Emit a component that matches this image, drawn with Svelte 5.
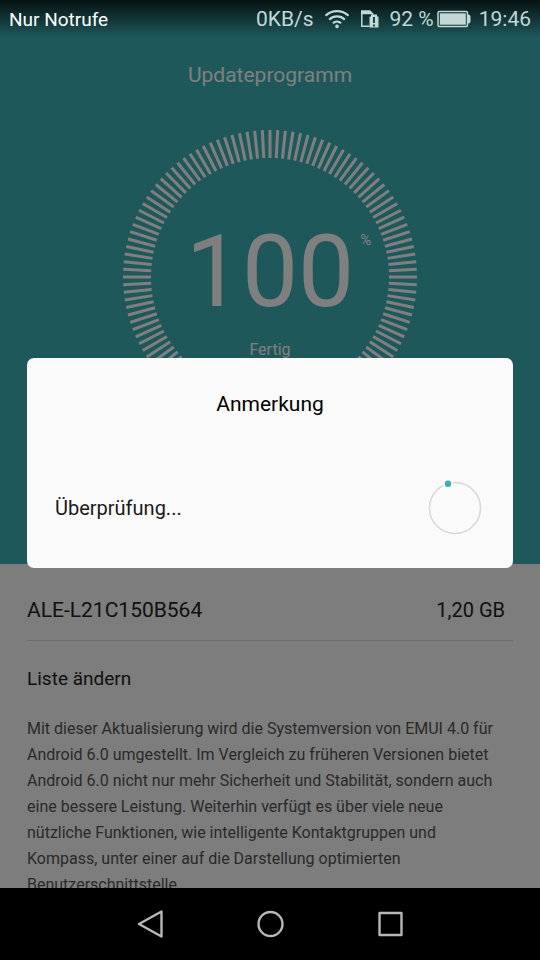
<script>
  const TICKS = 120;
  const ticks = Array.from({ length: TICKS }, (_, i) => (360 / TICKS) * i);

  const update = {
    percent: 100,
    version: 'ALE-L21C150B564',
    size: '1,20 GB',
    notes:
      'Mit dieser Aktualisierung wird die Systemversion von EMUI 4.0 für Android 6.0 umgestellt. Im Vergleich zu früheren Versionen bietet Android 6.0 nicht nur mehr Sicherheit und Stabilität, sondern auch eine bessere Leistung. Weiterhin verfügt es über viele neue nützliche Funktionen, wie intelligente Kontaktgruppen und Kompass, unter einer auf die Darstellung optimierten Benutzerschnittstelle.',
  };
</script>

<div class="screen">
  <main>
    <section class="hero">
      <h1>Updateprogramm</h1>
      <div class="dial">
        <svg class="ring" viewBox="0 0 294 294" aria-hidden="true">
          {#each ticks as angle}
            <line x1="147" y1="0" x2="147" y2="28" transform="rotate({angle} 147 147)" />
          {/each}
        </svg>
        <div class="readout">
          <div class="percent">{update.percent}<sup>%</sup></div>
          <div class="state">Fertig</div>
        </div>
      </div>
    </section>

    <section class="details">
      <div class="version">
        <span>{update.version}</span>
        <span class="size">{update.size}</span>
      </div>
      <h2>Liste ändern</h2>
      <p>{update.notes}</p>
    </section>
  </main>

  <nav>
    <button aria-label="Zurück">
      <svg width="30" height="30" viewBox="0 0 30 30"><path d="M26.500 2.500v25L4 15z" /></svg>
    </button>
    <button aria-label="Startseite">
      <svg width="30" height="30" viewBox="0 0 30 30"><circle cx="15.500" cy="15" r="12" /></svg>
    </button>
    <button aria-label="Übersicht">
      <svg width="30" height="30" viewBox="0 0 30 30"><rect x="4.500" y="4" width="22" height="22" /></svg>
    </button>
  </nav>

  <div class="scrim">
    <div class="dialog" role="dialog" aria-labelledby="dialog-title">
      <h2 id="dialog-title">Anmerkung</h2>
      <div class="checking">
        <span>Überprüfung...</span>
        <svg width="54" height="54" viewBox="0 0 54 54" aria-hidden="true">
          <circle class="track" cx="27" cy="27" r="25.5" />
          <circle class="halo" cx="20" cy="2.8" r="5" />
          <circle class="dot" cx="20" cy="2.8" r="3.2" />
        </svg>
      </div>
    </div>
  </div>

  <header class="status">
    <span class="carrier">Nur Notrufe</span>
    <span class="speed">0KB/s</span>
    <svg class="wifi" width="26" height="20" viewBox="0 0 26 20" aria-hidden="true">
      <path d="M1.5 6.8a16.5 16.5 0 0 1 23 0M5.2 10.6a11.2 11.2 0 0 1 15.6 0M8.900 14.3a6 6 0 0 1 8.2 0" />
      <circle cx="13" cy="17.4" r="1.8" />
    </svg>
    <svg class="sim" width="20" height="20" viewBox="0 0 20 20" aria-hidden="true">
      <path class="card" d="M9.5 17.2H1.800V2.200h8l3.200 3.300" />
      <path class="fill" d="M1 1.500h9.200L14 5.300H1z" />
      <path class="fill" d="M9.500 7.500h1.500V5.500h6v2h1.500v11h-9z" />
      <path class="mark" d="M14 8v6M14 15.500v2" />
    </svg>
    <span class="level">92 %</span>
    <svg class="battery" width="34" height="18" viewBox="0 0 34 18" aria-hidden="true">
      <rect class="case" x="1" y="1.5" width="29.5" height="15" rx="1.5" />
      <rect class="fill" x="2.8" y="3.3" width="26" height="11.4" />
      <path class="fill" d="M31 4.5h1L33.500 6v6L32 13.5h-1z" />
    </svg>
    <span class="clock">19:46</span>
  </header>
</div>

<style>
  :global(body) {
    margin: 0;
    background: #000;
  }

  .screen {
    position: relative;
    display: flex;
    flex-direction: column;
    height: 100vh;
    overflow: hidden;
    font-family: Roboto, 'Liberation Sans', sans-serif;
    color: #222;
  }

  main {
    flex: 1;
    min-height: 0;
    overflow: hidden;
    background: #fafafa;
  }

  h1, h2, p {
    margin: 0;
    font-weight: 400;
  }

  .hero {
    box-sizing: border-box;
    min-height: 564px;
    padding-top: 60px;
    display: flex;
    flex-direction: column;
    align-items: center;
    gap: 40px;
    background: #3cb0b6;
    color: #fff;
  }

  h1 {
    font-size: 21px;
    line-height: 30px;
  }

  .dial {
    display: grid;
    place-items: center;
    width: 294px;
    height: 294px;
  }

  .ring, .readout {
    grid-area: 1 / 1;
  }

  .ring {
    width: 100%;
    height: 100%;
    stroke: #fff;
    stroke-width: 3;
  }

  .readout {
    align-self: start;
    padding-top: 82px;
    text-align: center;
  }

  .percent {
    position: relative;
    font-size: 100px;
    line-height: 120px;
  }

  /* hangs off the number so the digits stay centred */
  sup {
    position: absolute;
    left: 100%;
    top: 18px;
    margin-left: 6px;
    font-size: 15px;
    line-height: 20px;
  }

  .state {
    margin-top: 6px;
    font-size: 16px;
    line-height: 24px;
  }

  .details {
    padding: 16px 27px 0;
  }

  .version {
    display: flex;
    justify-content: space-between;
    padding-right: 8px;
    border-bottom: 1px solid #d8d8d8;
    font-size: 21px;
    line-height: 60px;
  }

  .size {
    font-size: 20px;
  }

  .details h2 {
    padding: 23px 0 22px;
    font-size: 19px;
    line-height: 30px;
  }

  p {
    padding-right: 8px;
    font-size: 16px;
    line-height: 26px;
    color: #555;
  }

  nav {
    display: flex;
    justify-content: center;
    gap: 60px;
    height: 72px;
    background: #000;
  }

  nav button {
    width: 60px;
    padding: 0;
    border: 0;
    background: none;
    display: grid;
    place-items: center;
  }

  nav svg {
    fill: none;
    stroke: #b8b8b8;
    stroke-width: 2.4;
    stroke-linejoin: round;
  }

  nav, .status {
    position: relative;
    z-index: 2;
  }

  .scrim {
    position: absolute;
    inset: 0;
    z-index: 1;
    display: flex;
    align-items: center;
    padding: 38px 27px 72px;
    background: rgba(0, 0, 0, 0.5);
  }

  .dialog {
    flex: 1;
    border-radius: 7px;
    background: #fafafa;
    color: #1a1a1a;
  }

  .dialog h2 {
    padding: 31px 0;
    font-size: 21px;
    line-height: 30px;
    text-align: center;
    color: #000;
  }

  .checking {
    display: flex;
    align-items: center;
    justify-content: space-between;
    padding: 31px 31px 33px 28px;
    font-size: 20px;
  }

  .checking svg {
    overflow: visible;
  }

  .track {
    fill: none;
    stroke: #d8d8d8;
    stroke-width: 1.5;
  }

  .halo { fill: #fafafa; }
  .dot { fill: #35b0b5; }

  .status {
    position: absolute;
    top: 0;
    left: 0;
    right: 0;
    display: flex;
    align-items: center;
    height: 38px;
    padding: 0 9px;
    background: linear-gradient(rgba(0, 0, 0, 0.8), rgba(0, 0, 0, 0));
    font-size: 21px;
    color: #c2d8d6;
  }

  .carrier {
    margin-right: auto;
    font-size: 19px;
    color: #fff;
  }

  .wifi { margin: 0 10px; }
  .sim { margin-right: 10px; }
  .battery { margin: 0 8px 0 3px; }

  .wifi path {
    fill: none;
    stroke: #c2d8d6;
    stroke-width: 2.2;
  }

  .wifi circle, .fill { fill: #c2d8d6; }

  .card, .case {
    fill: none;
    stroke: #c2d8d6;
    stroke-width: 1.5;
  }

  .mark {
    stroke: #17494b;
    stroke-width: 2;
  }
</style>
